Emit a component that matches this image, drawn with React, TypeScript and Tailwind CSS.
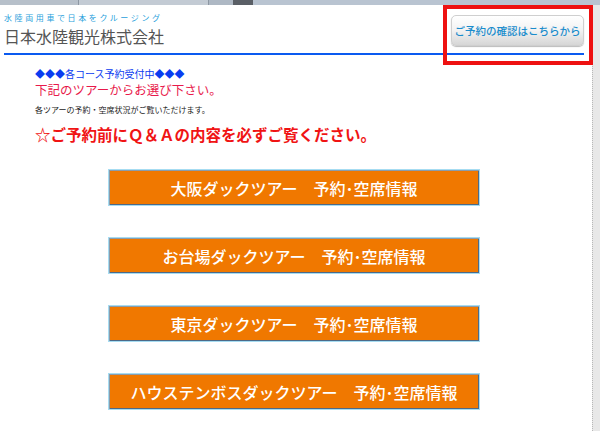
const tours = [
  "大阪ダックツアー　予約･空席情報",
  "お台場ダックツアー　予約･空席情報",
  "東京ダックツアー　予約･空席情報",
  "ハウステンボスダックツアー　予約･空席情報",
];

export default function App() {
  return (
    <div className="relative flex h-[431px] w-[600px] flex-col overflow-hidden bg-white font-['Noto_Sans_CJK_JP',sans-serif]">
      {/* cropped browser chrome at the very top */}
      <div className="flex h-[5px] w-full bg-gradient-to-b from-[#c9d1da] to-[#9aa6b6]">
        <div className="w-[78px] bg-[#b7c0ca]" />
        <div className="w-[130px] border-l border-[#8d97a3] bg-[#c3cbd4]" />
        <div className="w-[25px] border-l border-[#8d97a3] bg-[#aeb8c4]" />
        <div className="w-[20px] bg-[#5a5f66]" />
        <div className="flex-1 bg-[#b9c4d1]" />
      </div>

      <div className="flex flex-1">
        <div className="flex-1">
          <header className="ml-[4px] mr-[8px] flex h-[50px] items-start justify-between border-b-2 border-[#0a5af0]">
            <div className="pt-[8px]">
              <div className="text-[8px] leading-[10px] tracking-[2.6px] text-[#2a9fdc]">
                水陸両用車で日本をクルージング
              </div>
              <div className="mt-[3px] text-[16px] leading-[20px] text-[#555555]">
                日本水陸観光株式会社
              </div>
            </div>
            <button className="mt-[10px] flex h-[31px] w-[133px] items-center justify-center whitespace-nowrap rounded-[5px] border border-[#cfcfcf] bg-gradient-to-b from-[#ffffff] via-[#f2f2f2] to-[#d6d6d6] text-[10.5px] font-medium text-[#1a8ccc] shadow-[0_1px_1px_#bbbbbb]">
              ご予約の確認はこちらから
            </button>
          </header>

          <div className="pl-[35px] pt-[13px]">
            <p className="text-[10px] leading-[12px] text-[#0a3cf0]">◆◆◆各コース予約受付中◆◆◆</p>
            <p className="mt-[2px] text-[12.5px] leading-[15px] text-[#e8194b]">下記のツアーからお選び下さい。</p>
            <p className="mt-[8px] text-[8px] leading-[10px] text-[#222222]">各ツアーの予約・空席状況がご覧いただけます。</p>
            <p className="mt-[9px] text-[15.5px] font-bold leading-[20px] text-[#f01414]">
              ☆ご予約前にＱ＆Ａの内容を必ずご覧ください。
            </p>
          </div>

          <div className="ml-[108px] mt-[25px] flex w-[372px] flex-col gap-[31px]">
            {tours.map((t) => (
              <a
                key={t}
                className="flex h-[37px] items-center justify-center whitespace-nowrap border border-[#a6dcf2] bg-[#f07800] text-[16px] font-medium text-white shadow-[inset_1px_1px_0_#8a9cab,inset_-1px_-1px_0_#4d6a88]"
              >
                {t}
              </a>
            ))}
          </div>
        </div>

        {/* page scrollbar edge */}
        <div className="w-[8px] border-l border-dotted border-[#b8b8b8] bg-[#e8e8e8]" />
      </div>

      {/* red highlight annotation */}
      <div className="absolute left-[443px] top-[5px] h-[60px] w-[150px] border-4 border-[#ee1111]" />
    </div>
  );
}
